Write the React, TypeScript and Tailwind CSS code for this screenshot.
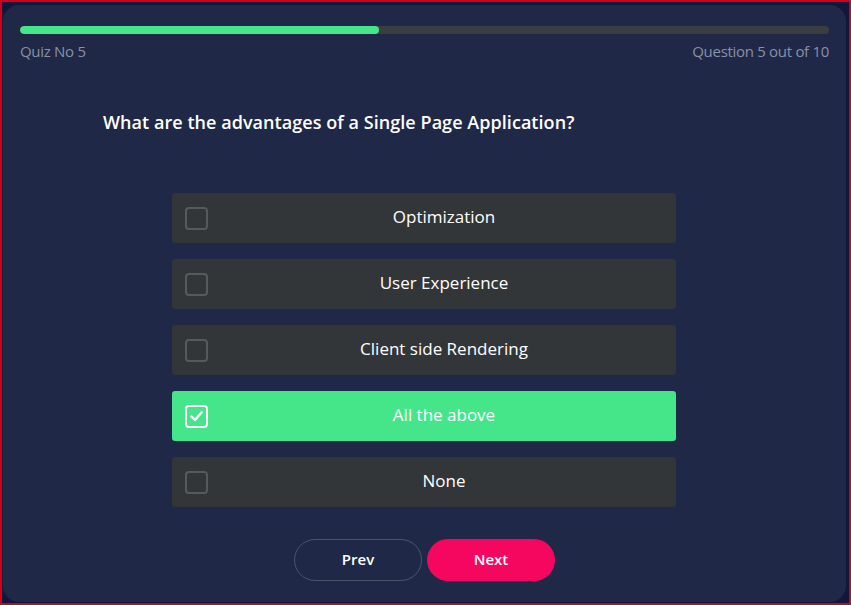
import React from "react";

const options = [
  { label: "Optimization", checked: false },
  { label: "User Experience", checked: false },
  { label: "Client side Rendering", checked: false },
  { label: "All the above", checked: true },
  { label: "None", checked: false },
];

export default function App() {
  return (
    <div
      className="w-[851px] h-[605px] border-2 border-[#d0021b] bg-[#12163a] pl-[1px] pr-[3px] pt-[3px] pb-[1px]"
      style={{ fontFamily: '"Open Sans", "Noto Sans", sans-serif' }}
    >
      <div className="h-full w-full rounded-[16px] bg-[#1f2846] px-[17px] pt-[21px] flex flex-col">
        <div className="h-[8px] w-full rounded-full bg-[#3a3e40] overflow-hidden">
          <div className="h-full w-[359px] rounded-full bg-[#45e68a]" />
        </div>
        <div className="mt-[7px] flex justify-between text-[15px] leading-[20px] text-[#8891a6] tracking-[-0.3px]">
          <span>Quiz No 5</span>
          <span>Question 5 out of 10</span>
        </div>
        <div className="mt-[49px] pl-[83px] text-[18px] leading-[24px] font-semibold text-white tracking-[0.05px]">
          What are the advantages of a Single Page Application?
        </div>
        <div className="mt-[59px] pr-[1px] flex flex-col gap-[16px] items-center">
          {options.map((o) => (
            <div
              key={o.label}
              className={
                "w-[504px] h-[50px] rounded-[3px] flex items-center pl-[13px] " +
                (o.checked ? "bg-[#45e68a]" : "bg-[#333638]")
              }
            >
              <div
                className={
                  "shrink-0 w-[23px] h-[23px] rounded-[4px] border-2 flex items-center justify-center " +
                  (o.checked ? "border-white" : "border-[#575a5d]")
                }
              >
                {o.checked && (
                  <svg width="13" height="11" viewBox="0 0 13 11">
                    <path
                      d="M1.5 5.5 L5 9 L11.5 1.5"
                      fill="none"
                      stroke="white"
                      strokeWidth="2.4"
                      strokeLinecap="round"
                      strokeLinejoin="round"
                    />
                  </svg>
                )}
              </div>
              <span className="flex-1 ml-[4px] mb-[3px] text-center text-[17px] leading-[22px] text-white font-medium">
                {o.label}
              </span>
            </div>
          ))}
        </div>
        <div className="mt-[32px] flex justify-center gap-[5px]">
          <button className="w-[128px] h-[42px] pb-[2px] rounded-full border border-[#4b5468] text-white text-[15px] font-semibold bg-transparent">
            Prev
          </button>
          <button className="w-[128px] h-[42px] pb-[2px] rounded-full bg-[#f5075f] text-white text-[15px] font-semibold">
            Next
          </button>
        </div>
      </div>
    </div>
  );
}
